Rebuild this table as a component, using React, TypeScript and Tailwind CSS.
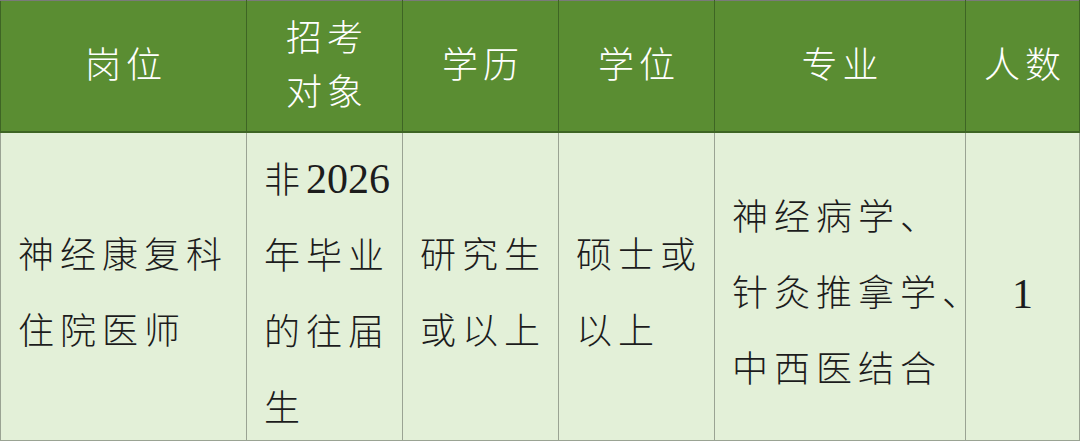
const headers: { lines: string[]; w: string }[] = [
  { lines: ['岗位'], w: 'w-[246px]' },
  { lines: ['招考', '对象'], w: 'w-[156px]' },
  { lines: ['学历'], w: 'w-[156px]' },
  { lines: ['学位'], w: 'w-[156px]' },
  { lines: ['专业'], w: 'w-[251px]' },
  { lines: ['人数'], w: 'w-[114px]' },
]

const Num = ({ children }: { children: string }) => (
  <span className="text-[42px] font-normal tracking-normal">{children}</span>
)

const body: React.ReactNode[][] = [
  ['神经康复科', '住院医师'],
  [<>非<Num>2026</Num></>, '年毕业', '的往届', '生'],
  ['研究生', '或以上'],
  ['硕士或', '以上'],
  ['神经病学、', '针灸推拿学、', '中西医结合'],
]

export default function App() {
  return (
    <div className="h-[443px] w-[1080px] overflow-hidden bg-white">
      <table
        className="w-[1079px] table-fixed border-collapse"
        style={{ fontFamily: '"Liberation Serif", "Noto Sans CJK SC", serif' }}
      >
        <thead>
          <tr className="h-[131px] bg-[#5a8d32]">
            {headers.map((h, i) => (
              <th
                key={i}
                className={`${h.w} border-x border-t border-b-2 border-x-[#3e6524] border-t-[#7a7a7a] border-b-[#3e6524] p-0 align-middle text-[36px] font-light leading-[54px] tracking-[5px] text-white`}
              >
                {h.lines.map((l) => (
                  <div key={l} className="whitespace-nowrap pl-[5px]">{l}</div>
                ))}
              </th>
            ))}
          </tr>
        </thead>
        <tbody>
          <tr className="h-[309px] bg-[#e3f0d8]">
            {body.map((lines, i) => (
              <td
                key={i}
                className="border border-[#9aa393] p-0 pl-[17px] align-middle text-[36px] font-light tracking-[6px] text-[#1c1c1c]"
              >
                {lines.map((l, j) => (
                  <div key={j} className="whitespace-nowrap pt-[16px] leading-[60px]">{l}</div>
                ))}
              </td>
            ))}
            <td className="border border-[#9aa393] p-0 text-center align-middle text-[#1c1c1c]">
              <div className="pt-[16px] text-[42px] leading-[60px]">1</div>
            </td>
          </tr>
        </tbody>
      </table>
    </div>
  )
}
